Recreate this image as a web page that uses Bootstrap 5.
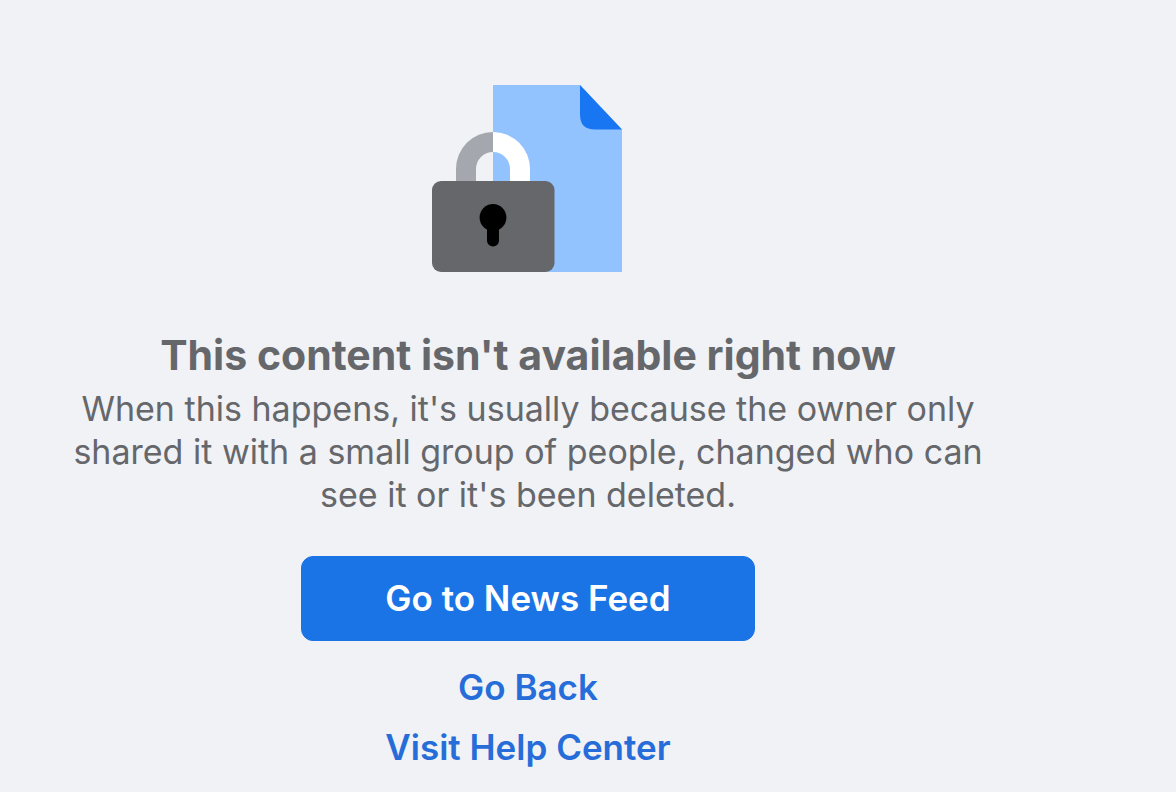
<!DOCTYPE html>
<html lang="en">
<head>
<meta charset="utf-8">
<meta name="viewport" content="width=device-width, initial-scale=1">
<title>Content unavailable</title>
<link href="https://cdn.jsdelivr.net/npm/bootstrap@5.3.0/dist/css/bootstrap.min.css" rel="stylesheet">
<style>
body { background: #f0f2f6; color: #65676b; font-family: Inter, "Liberation Sans", sans-serif; }
.notice { max-width: 1056px; padding: 84px 64px 16px; }
.notice-title { font-size: 41px; line-height: 48px; font-weight: 700; margin: 58px 0 8px; }
.notice-text { font-size: 34px; line-height: 43px; margin-bottom: 40px; }
.btn-feed { --bs-btn-bg: #1b74e6; --bs-btn-color: #fff; --bs-btn-border-color: #1b74e6; --bs-btn-hover-bg: #1668d2; --bs-btn-hover-color: #fff; width: 454px; max-width: 100%; height: 85px; border-radius: 12px; font-size: 35px; font-weight: 600; }
.notice-link { color: #266dd9; font-size: 35px; line-height: 44px; font-weight: 600; }
</style>
</head>
<body>
<main class="notice d-flex flex-column align-items-center text-center">
<svg width="192" height="189" viewBox="432 84 192 189" role="img" aria-label="Locked document">
<path fill="#92c3ff" d="M493 85h87l42 44.500v142.500H493z"/>
<path fill="#1876f2" d="M580 85l42 44.500h-27q-15 0-15-15z"/>
<path fill="#a4a7ad" d="M493 132a37 37 0 0 0-37 37v14h20v-14a17 17 0 0 1 17-17z"/>
<path fill="#fff" d="M493 132a37 37 0 0 1 37 37v14h-20v-14a17 17 0 0 0-17-17z"/>
<rect x="432" y="181" width="122.500" height="91" rx="9" fill="#65676b"/>
<circle cx="493" cy="217.500" r="13.400"/>
<rect x="487" y="220" width="12" height="26.500" rx="6"/>
</svg>
<h1 class="notice-title">This content isn't available right now</h1>
<p class="notice-text">When this happens, it's usually because the owner only shared it with a small group of people, changed who can see it or it's been deleted.</p>
<button type="button" class="btn btn-feed">Go to News Feed</button>
<nav class="d-flex flex-column align-items-center gap-3 mt-4" aria-label="Other options">
<a class="notice-link text-decoration-none" href="#">Go Back</a>
<a class="notice-link text-decoration-none" href="#">Visit Help Center</a>
</nav>
</main>
<script src="https://cdn.jsdelivr.net/npm/bootstrap@5.3.0/dist/js/bootstrap.bundle.min.js"></script>
</body>
</html>
